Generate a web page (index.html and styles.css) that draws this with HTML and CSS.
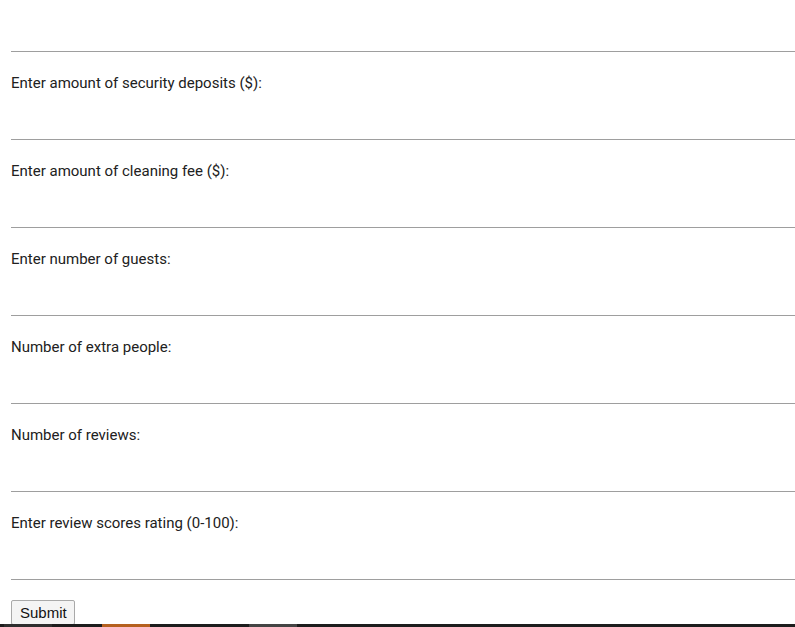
FILE: index.html
```html
<!DOCTYPE html>
<html>
<head>
<meta charset="utf-8">
<link rel="stylesheet" href="styles.css">
</head>
<body>
<form class="form">
  <div class="top-field"><input class="field-input" type="text"></div>
  <div class="field">
    <label class="field-label">Enter amount of security deposits ($):</label>
    <input class="field-input" type="text">
  </div>
  <div class="field">
    <label class="field-label">Enter amount of cleaning fee ($):</label>
    <input class="field-input" type="text">
  </div>
  <div class="field">
    <label class="field-label">Enter number of guests:</label>
    <input class="field-input" type="text">
  </div>
  <div class="field">
    <label class="field-label">Number of extra people:</label>
    <input class="field-input" type="text">
  </div>
  <div class="field">
    <label class="field-label">Number of reviews:</label>
    <input class="field-input" type="text">
  </div>
  <div class="field">
    <label class="field-label">Enter review scores rating (0-100):</label>
    <input class="field-input" type="text">
  </div>
  <div class="actions"><button class="submit" type="button">Submit</button></div>
</form>
<div class="bottom-bar">
  <span class="seg seg-a"></span>
  <span class="seg seg-b"></span>
  <span class="seg seg-c"></span>
  <span class="seg seg-d"></span>
  <span class="seg seg-e"></span>
  <span class="seg seg-f"></span>
  <span class="seg seg-g"></span>
</div>
</body>
</html>
```
FILE: styles.css
```css
html, body {
  margin: 0;
  padding: 0;
  background: #ffffff;
  overflow: hidden;
}
body {
  width: 795px;
  height: 627px;
  display: flex;
  flex-direction: column;
  font-family: Roboto, "Noto Sans", sans-serif;
}
.form {
  padding-left: 11px;
  display: flex;
  flex-direction: column;
  flex: 1;
}
.field-input {
  display: block;
  box-sizing: border-box;
  width: 784px;
  height: 46px;
  margin: 0;
  padding: 0;
  border: none;
  border-bottom: 1px solid #9e9e9e;
  background: transparent;
  outline: none;
}
.top-field .field-input {
  height: 52px;
}
.field {
  display: flex;
  flex-direction: column;
}
.field-label {
  display: block;
  padding-top: 20px;
  line-height: 22px;
  font-size: 15px;
  color: #212121;
}
.actions {
  padding-top: 20px;
}
.submit {
  box-sizing: border-box;
  height: 25px;
  padding: 0 7px 0 8px;
  font-family: "Liberation Sans", Arial, sans-serif;
  font-size: 15px;
  color: #111;
  background: #f4f4f4;
  border: 1px solid #a9a9a9;
  border-radius: 2px;
}
.bottom-bar {
  display: flex;
  height: 3px;
  margin-top: -1px;
  position: relative;
  background: #1d1d1d;
}
.seg { display: block; height: 3px; }
.seg-a { width: 4px; background: #1d1d1d; }
.seg-b { width: 48px; background: #2e2e2e; }
.seg-c { width: 50px; background: #1d1d1d; }
.seg-d { width: 48px; background: #b5601f; }
.seg-e { width: 99px; background: #1d1d1d; }
.seg-f { width: 48px; background: #444444; }
.seg-g { flex: 1; background: #1d1d1d; }
```
